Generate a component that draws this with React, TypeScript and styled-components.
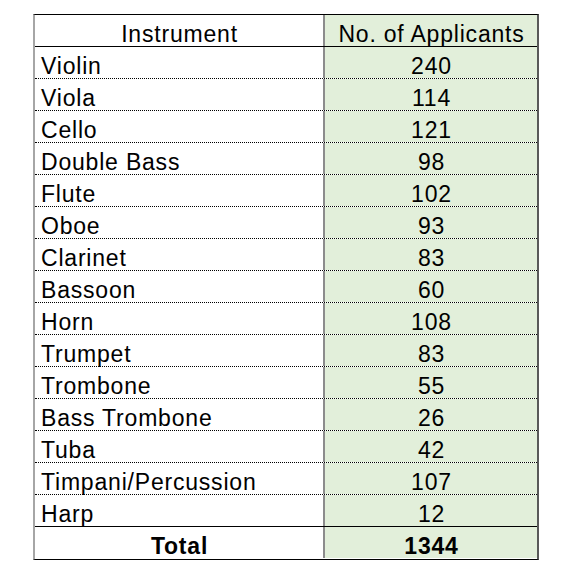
import React from 'react';
import styled, { createGlobalStyle } from 'styled-components';

const GlobalStyle = createGlobalStyle`
	html, body {
		margin: 0;
		padding: 0;
		background: #ffffff;
	}
	body {
		font-family: 'Liberation Sans', Arial, sans-serif;
		color: #000000;
	}
`;

const Page = styled.div`
	padding: 14px 0 0 33px;
`;

const Table = styled.div`
	width: 506px;
	border-top: 1px solid #000000;
	border-bottom: 1px solid #000000;
	border-left: 2px solid #a6a6a6;
	border-right: 2px solid #595959;
	box-sizing: border-box;
`;

const Row = styled.div<{ $line: 'solid' | 'dotted' | 'none' }>`
	display: grid;
	grid-template-columns: 290px 1fr;
	height: 32px;
	box-sizing: border-box;
	border-bottom: ${p => (p.$line === 'none' ? '0' : `1px ${p.$line} #000000`)};
`;

const Cell = styled.div<{ $align: 'left' | 'center'; $green?: boolean; $bold?: boolean }>`
	box-sizing: border-box;
	height: 31px;
	padding: 7px 5px 0 6px;
	line-height: 24px;
	font-size: 23px;
	letter-spacing: 0.8px;
	white-space: nowrap;
	text-align: ${p => p.$align};
	font-weight: ${p => (p.$bold ? 700 : 400)};
	background: ${p => (p.$green ? '#e2efda' : '#ffffff')};
`;

const NameCell = styled(Cell)`
	border-right: 2px solid #8c8c8c;
`;

const data: [string, number][] = [
	['Violin', 240],
	['Viola', 114],
	['Cello', 121],
	['Double Bass', 98],
	['Flute', 102],
	['Oboe', 93],
	['Clarinet', 83],
	['Bassoon', 60],
	['Horn', 108],
	['Trumpet', 83],
	['Trombone', 55],
	['Bass Trombone', 26],
	['Tuba', 42],
	['Timpani/Percussion', 107],
	['Harp', 12]
];

const App: React.FunctionComponent<{}> = () => {
	const total = data.reduce((sum, d) => sum + d[1], 0);

	return (
		<Page>
			<GlobalStyle />
			<Table>
				<Row $line={'solid'}>
					<NameCell $align={'center'}>Instrument</NameCell>
					<Cell $align={'center'} $green={true}>
						No. of Applicants
					</Cell>
				</Row>
				{data.map(([name, count], i) => (
					<Row key={name} $line={i === data.length - 1 ? 'solid' : 'dotted'}>
						<NameCell $align={'left'}>{name}</NameCell>
						<Cell $align={'center'} $green={true}>
							{count}
						</Cell>
					</Row>
				))}
				<Row $line={'none'}>
					<NameCell $align={'center'} $bold={true}>
						Total
					</NameCell>
					<Cell $align={'center'} $green={true} $bold={true}>
						{total}
					</Cell>
				</Row>
			</Table>
		</Page>
	);
};

export default App;
